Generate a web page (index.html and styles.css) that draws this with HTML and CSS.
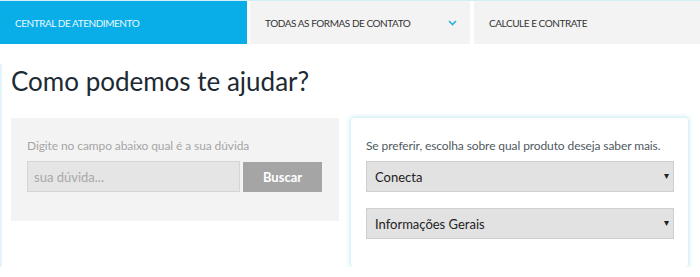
FILE: index.html
```html
<!DOCTYPE html>
<html lang="pt-BR">
<head>
    <meta charset="UTF-8">
    <meta name="viewport" content="width=device-width, initial-scale=1.0">
    <title>Central de Atendimento</title>
    <link rel="stylesheet" href="styles.css">
</head>
<body>
    <nav class="tabs">
        <a class="tab tab-active" href="#">CENTRAL DE ATENDIMENTO</a>
        <a class="tab tab-contato" href="#">
            TODAS AS FORMAS DE CONTATO
            <svg class="chevron" width="9" height="6" viewBox="0 0 9 6"><path d="M1 1 L4.5 4.5 L8 1" fill="none" stroke="#2ab0dc" stroke-width="1.6"/></svg>
        </a>
        <a class="tab tab-calcule" href="#">CALCULE E CONTRATE</a>
    </nav>

    <main class="content">
        <h1>Como podemos te ajudar?</h1>

        <div class="panels">
            <div class="panel panel-busca">
                <p class="panel-label">Digite no campo abaixo qual é a sua dúvida</p>
                <form class="busca">
                    <input type="text" class="busca-input" placeholder="sua dúvida...">
                    <button type="button" class="busca-btn">Buscar</button>
                </form>
            </div>

            <div class="panel panel-produto">
                <p class="panel-label">Se preferir, escolha sobre qual produto deseja saber mais.</p>
                <div class="select-wrap">
                    <select class="select">
                        <option>Conecta</option>
                    </select>
                    <span class="select-arrow">&#9662;</span>
                </div>
                <div class="select-wrap">
                    <select class="select">
                        <option>Informações Gerais</option>
                    </select>
                    <span class="select-arrow">&#9662;</span>
                </div>
            </div>
        </div>
    </main>
</body>
</html>
```

FILE: styles.css
```css
body {
    margin: 0;
    font-family: Lato, "Open Sans", sans-serif;
    background: #ffffff;
    color: #1e2b33;
}
.tabs {
    display: flex;
    height: 43px;
    gap: 3px;
    border-top: 1px solid #d2eef6;
}
.tab {
    display: flex;
    align-items: center;
    padding-left: 15px;
    font-size: 10px;
    letter-spacing: -0.45px;
    color: #333;
    text-decoration: none;
    background: #f4f3f3;
}
.tab-active {
    width: 232px;
    background: #09aee8;
    color: #e9f8fd;
}
.tab-contato {
    width: 205px;
}
.tab-calcule {
    flex: 1;
    margin-left: 1px;
}
.chevron {
    margin-left: auto;
    margin-right: 13px;
}
.content {
    padding: 0 12px 0 9px;
    border-left: 2px solid #e3f5fb;
}
h1 {
    margin: 20px 0 20px 0;
    font-size: 26px;
    font-weight: 400;
    line-height: 34px;
    color: #1d2a33;
}
.panels {
    display: flex;
    align-items: flex-start;
    gap: 12px;
}
.panel-busca {
    width: 296px;
    padding: 20px 16px 29px 16px;
    background: #f4f3f3;
}
.panel-produto {
    flex: 1;
    padding: 20px 14px 28px 15px;
    background: #fff;
    border-radius: 3px;
    box-shadow: 0 0 4px 1px rgba(120, 205, 230, 0.45);
}
.panel-label {
    margin: 0 0 8px 0;
    font-size: 12px;
    letter-spacing: -0.1px;
    color: #a6a6a6;
}
.panel-produto .panel-label {
    color: #4f5a60;
}
.busca {
    display: flex;
    gap: 3px;
}
.busca-input {
    width: 213px;
    height: 31px;
    box-sizing: border-box;
    padding: 0 6px;
    border: 1px solid #d5d5d5;
    background: #e5e5e5;
    font-family: Lato, sans-serif;
    font-size: 13px;
}
.busca-input::placeholder {
    color: #a9a9a9;
}
.busca-btn {
    width: 79px;
    height: 30px;
    margin-top: 1px;
    border: none;
    background: #a5a5a5;
    color: #fff;
    font-family: Lato, sans-serif;
    font-size: 13px;
    font-weight: bold;
}
.select-wrap {
    position: relative;
    margin-bottom: 16px;
}
.select-wrap:last-child {
    margin-bottom: 0;
}
.select {
    appearance: none;
    width: 100%;
    height: 31px;
    padding: 0 8px;
    border: 1px solid #cfcfcf;
    background: #e2e2e2;
    font-family: Lato, sans-serif;
    font-size: 13px;
    color: #222;
}
.select-arrow {
    position: absolute;
    right: 5px;
    top: 8px;
    font-size: 10px;
    color: #222;
    pointer-events: none;
}
```
